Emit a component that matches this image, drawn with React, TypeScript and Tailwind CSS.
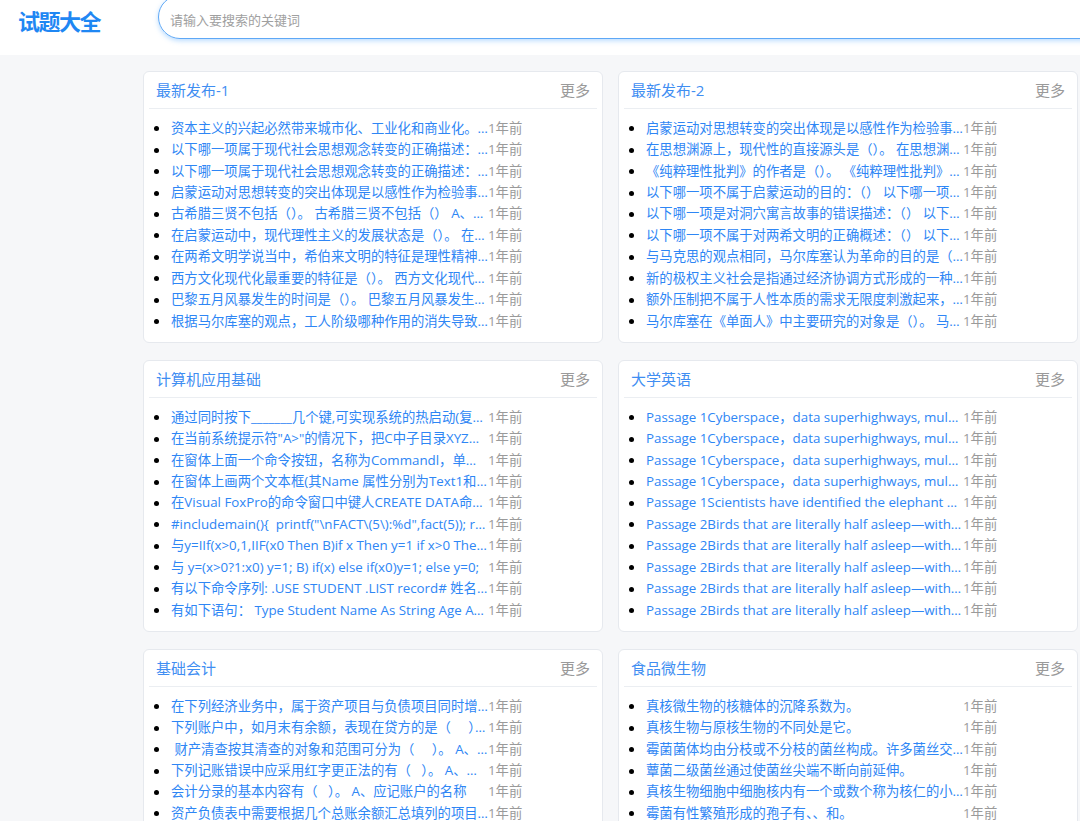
import React from "react";

type Card = { title: string; items: string[] };

const cards: Card[] = [
  {
    title: "最新发布-1",
    items: [
      "资本主义的兴起必然带来城市化、工业化和商业化。 资本主义的兴起必然带来",
      "以下哪一项属于现代社会思想观念转变的正确描述： 以下哪一项属于",
      "以下哪一项属于现代社会思想观念转变的正确描述： 以下哪一项属于",
      "启蒙运动对思想转变的突出体现是以感性作为检验事物的标准",
      "古希腊三贤不包括（）。 古希腊三贤不包括（） A、苏格拉底",
      "在启蒙运动中，现代理性主义的发展状态是（）。 在启蒙运动中",
      "在两希文明学说当中，希伯来文明的特征是理性精神和",
      "西方文化现代化最重要的特征是（）。 西方文化现代化最重要的",
      "巴黎五月风暴发生的时间是（）。 巴黎五月风暴发生的时间是",
      "根据马尔库塞的观点，工人阶级哪种作用的消失导致了",
    ],
  },
  {
    title: "最新发布-2",
    items: [
      "启蒙运动对思想转变的突出体现是以感性作为检验事物的标准",
      "在思想渊源上，现代性的直接源头是（）。 在思想渊源上",
      "《纯粹理性批判》的作者是（）。 《纯粹理性批判》的作者",
      "以下哪一项不属于启蒙运动的目的：（） 以下哪一项不属于",
      "以下哪一项是对洞穴寓言故事的错误描述：（） 以下哪一项",
      "以下哪一项不属于对两希文明的正确概述：（） 以下哪一项",
      "与马克思的观点相同，马尔库塞认为革命的目的是（）。 与马克思",
      "新的极权主义社会是指通过经济协调方式形成的一种社会",
      "额外压制把不属于人性本质的需求无限度刺激起来，使人",
      "马尔库塞在《单面人》中主要研究的对象是（）。 马尔库塞",
    ],
  },
  {
    title: "计算机应用基础",
    items: [
      "通过同时按下_______几个键,可实现系统的热启动(复位)。",
      "在当前系统提示符\"A>\"的情况下，把C中子目录XYZ下的文件",
      "在窗体上面一个命令按钮，名称为Commandl，单击该按钮",
      "在窗体上画两个文本框(其Name 属性分别为Text1和Text2)",
      "在Visual FoxPro的命令窗口中键人CREATE DATA命令以后",
      "#includemain(){  printf(\"\\nFACT\\(5\\):%d\",fact(5)); return 0;}",
      "与y=IIf(x>0,1,IIF(x0 Then B)if x Then y=1 if x>0 Then y=1",
      "与 y=(x>0?1:x0) y=1; B) if(x) else if(x0)y=1; else y=0;",
      "有以下命令序列: .USE STUDENT .LIST record# 姓名 性别",
      "有如下语句： Type Student Name As String Age As Integer",
    ],
  },
  {
    title: "大学英语",
    items: [
      "Passage 1Cyberspace，data superhighways, multimedia—for those",
      "Passage 1Cyberspace，data superhighways, multimedia—for those",
      "Passage 1Cyberspace，data superhighways, multimedia—for those",
      "Passage 1Cyberspace，data superhighways, multimedia—for those",
      "Passage 1Scientists have identified the elephant as the",
      "Passage 2Birds that are literally half asleep—with one",
      "Passage 2Birds that are literally half asleep—with one",
      "Passage 2Birds that are literally half asleep—with one",
      "Passage 2Birds that are literally half asleep—with one",
      "Passage 2Birds that are literally half asleep—with one",
    ],
  },
  {
    title: "基础会计",
    items: [
      "在下列经济业务中，属于资产项目与负债项目同时增加的是",
      "下列账户中，如月末有余额，表现在贷方的是（     ）。 A、",
      " 财产清查按其清查的对象和范围可分为（     ）。 A、全面清查",
      "下列记账错误中应采用红字更正法的有（   ）。 A、记账后",
      "会计分录的基本内容有（   ）。 A、应记账户的名称",
      "资产负债表中需要根据几个总账余额汇总填列的项目有",
      "下列各项中，属于会计核算基本前提的有（   ）。",
      "借贷记账法的记账规则是（   ）。 A、有借必有贷",
      "会计科目按其所提供信息的详细程度不同，可分为",
      "下列项目中，属于流动资产的有（   ）。 A、银行存款",
    ],
  },
  {
    title: "食品微生物",
    items: [
      "真核微生物的核糖体的沉降系数为。",
      "真核生物与原核生物的不同处是它。",
      "霉菌菌体均由分枝或不分枝的菌丝构成。许多菌丝交织在一起",
      "蕈菌二级菌丝通过使菌丝尖端不断向前延伸。",
      "真核生物细胞中细胞核内有一个或数个称为核仁的小体",
      "霉菌有性繁殖形成的孢子有、、和。",
      "酵母菌的无性繁殖方式主要是。",
      "细菌的基本形态有、和三种。",
      "放线菌的菌丝可分为、和。",
      "病毒的基本结构由和组成。",
    ],
  },
];

function ListCard({ card }: { card: Card }) {
  return (
    <div className="bg-white border border-[#e6e9ee] rounded-[6px] h-[272px] overflow-hidden">
      <div className="mx-[5px] h-[37px] border-b border-[#ebeef2] flex items-center justify-between pl-[7px] pr-[7px]">
        <span className="text-[15px] text-[#3f8ef2]">{card.title}</span>
        <span className="text-[15px] text-[#9a9a9a]">更多</span>
      </div>
      <ul className="pt-[9px] pb-[11px]">
        {card.items.map((t, i) => (
          <li key={i} className="h-[21.45px] flex items-center pl-[10px] text-[13.33px]">
            <span className="w-[5px] h-[5px] rounded-full bg-black shrink-0 mr-[12px]" />
            <span className="w-[317px] shrink-0 truncate text-[#2e86f5] whitespace-pre">{t}</span>
            <span className="text-[#9a9a9a]">1年前</span>
          </li>
        ))}
      </ul>
    </div>
  );
}

export default function App() {
  return (
    <div className="w-[1080px] h-[821px] overflow-hidden bg-[#f6f7f9] font-[family-name:'Open_Sans','Noto_Sans_CJK_SC',sans-serif]">
      <header className="h-[55px] bg-white flex items-start overflow-hidden">
        <div className="w-[158px] shrink-0 h-[40px] flex items-center pl-[18px]">
          <span className="text-[22px] font-bold text-[#1f87f3] tracking-[-1.5px] font-[family-name:'Noto_Sans_CJK_SC',sans-serif]">
            试题大全
          </span>
        </div>
        <div className="-mt-[5px] w-[960px] h-[44px] shrink-0 rounded-full border border-[#5ea8f6] shadow-[0_2px_5px_rgba(64,158,255,0.35)] flex items-center pl-[11px] pt-[5px]">
          <span className="text-[13px] text-[#a0a0a0] font-[family-name:'Noto_Sans_CJK_SC',sans-serif]">请输入要搜索的关键词</span>
        </div>
      </header>
      <main className="pl-[143px] pt-[16px] grid grid-cols-[460px_460px] gap-x-[15px] gap-y-[17px]">
        {cards.map((c, i) => (
          <ListCard key={i} card={c} />
        ))}
      </main>
    </div>
  );
}
